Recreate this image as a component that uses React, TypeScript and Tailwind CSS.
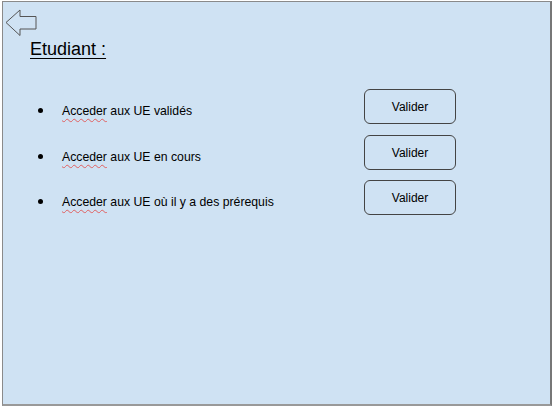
const items = [
  { rest: " aux UE validés", y: "mt-[27px]" },
  { rest: " aux UE en cours", y: "mt-[11px]" },
  { rest: " aux UE où il y a des prérequis", y: "mt-[10px]" },
];

function BackArrow() {
  return (
    <svg width="34" height="30" viewBox="0 0 34 30" className="block">
      <path
        d="M1 13.5 L15 1 L15 7.5 L31 7.5 L31 20 L15 20 L15 26.5 Z"
        fill="none"
        stroke="#555"
        strokeWidth="1"
      />
    </svg>
  );
}

export default function App() {
  return (
    <div className="w-[553px] h-[407px] bg-white pt-[1px] pl-[2px] font-['Liberation_Sans',Arial,sans-serif]">
      <div className="w-[550px] h-[405px] bg-[#cfe2f3] border border-[#8a8a8a] border-r-2 border-b-2 border-r-[#777] border-b-[#999] flex flex-col">
        <div className="pl-[2px] pt-[7px]">
          <BackArrow />
        </div>
        <div className="pl-[27px] mt-[-1px]">
          <span className="text-[18px] leading-[20px] text-black underline underline-offset-[3px] decoration-1">
            Etudiant :
          </span>
        </div>
        {items.map((it, i) => (
          <div key={i} className={`flex items-center ${it.y}`}>
            <div className="w-[361px] flex items-center pl-[35px] pt-[8px]">
              <span className="w-[5px] h-[5px] rounded-full bg-black" />
              <span className="ml-[19px] text-[12.25px] leading-[14px] text-black">
                <span className="underline decoration-wavy decoration-[#e06060] decoration-1 underline-offset-[3px]">
                  Acceder
                </span>
                {it.rest}
              </span>
            </div>
            <button className="w-[92px] h-[35px] rounded-[6px] border border-[#444] bg-transparent text-[12px] text-black">
              Valider
            </button>
          </div>
        ))}
      </div>
    </div>
  );
}
